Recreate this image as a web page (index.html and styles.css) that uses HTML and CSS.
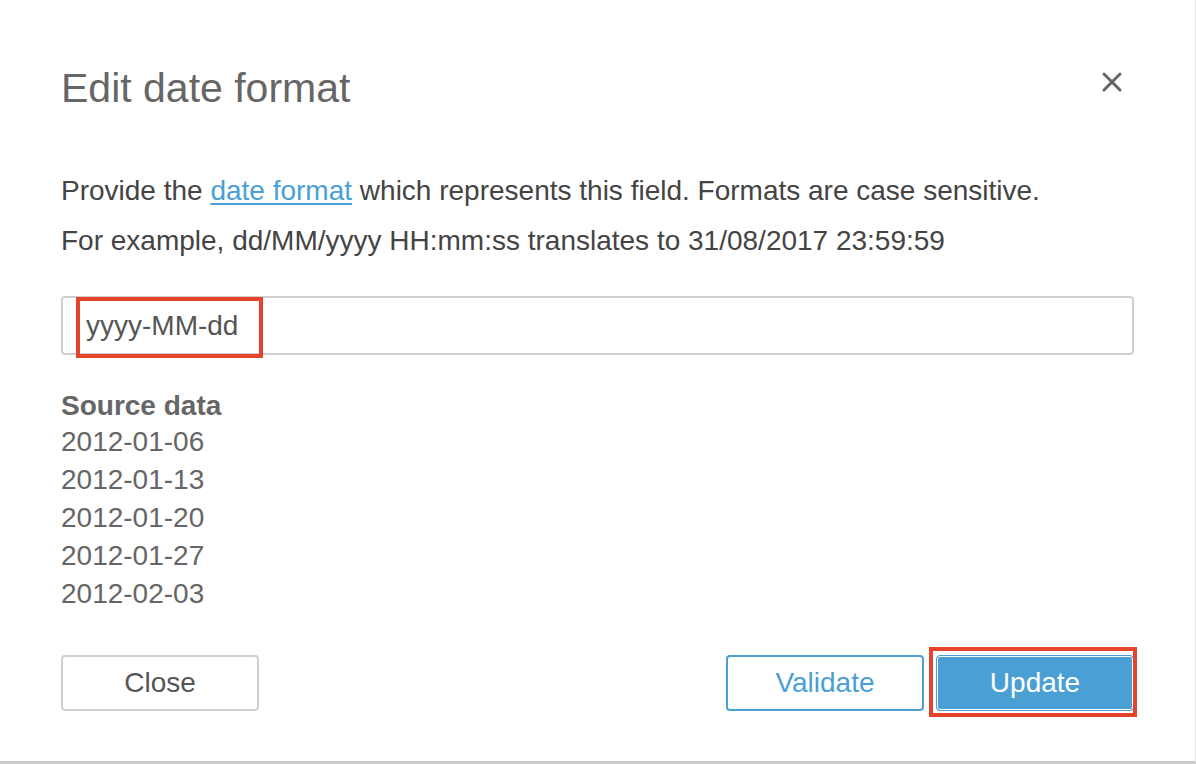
FILE: index.html
```html
<!DOCTYPE html>
<html lang="en">
<head>
<meta charset="utf-8">
<title>Edit date format</title>
<link rel="stylesheet" href="styles.css">
</head>
<body>
<div class="modal">
  <header class="modal-header">
    <h1 class="modal-title">Edit date format</h1>
    <button class="modal-close" aria-label="Close">
      <svg width="20" height="20" viewBox="0 0 20 20"><path d="M2 2 L18 18 M18 2 L2 18" stroke="#666" stroke-width="3" stroke-linecap="round" fill="none"/></svg>
    </button>
  </header>
  <div class="modal-body">
    <p class="help">Provide the <a href="#" class="link">date format</a> which represents this field. Formats are case sensitive.</p>
    <p class="help">For example, dd/MM/yyyy HH:mm:ss translates to 31/08/2017 23:59:59</p>
    <div class="field">
      <input class="text-input" type="text" value="yyyy-MM-dd">
      <span class="highlight highlight-input"></span>
    </div>
    <div class="source">
      <div class="source-title">Source data</div>
      <div class="source-row">2012-01-06</div>
      <div class="source-row">2012-01-13</div>
      <div class="source-row">2012-01-20</div>
      <div class="source-row">2012-01-27</div>
      <div class="source-row">2012-02-03</div>
    </div>
  </div>
  <footer class="modal-footer">
    <button class="btn btn-default">Close</button>
    <div class="btn-group">
      <button class="btn btn-outline">Validate</button>
      <div class="btn-wrap">
        <button class="btn btn-primary">Update</button>
        <span class="highlight highlight-btn"></span>
      </div>
    </div>
  </footer>
</div>
</body>
</html>
```

FILE: styles.css
```css
* { box-sizing: border-box; }
html, body { margin: 0; padding: 0; background: #fff; }
body { font-family: "Liberation Sans", Arial, Helvetica, sans-serif; }

.modal {
  width: 1196px;
  height: 764px;
  border-bottom: 3px solid #c9c9c9;
  border-right: 1px solid #e6e6e6;
  padding: 64px 61px 0 61px;
  display: flex;
  flex-direction: column;
}

.modal-header {
  display: flex;
  justify-content: space-between;
  align-items: flex-start;
  height: 48px;
}
.modal-title {
  margin: 0;
  font-size: 41px;
  line-height: 48px;
  font-weight: normal;
  color: #666;
}
.modal-close {
  border: none;
  background: none;
  padding: 0;
  margin: 8px 12px 0 0;
  width: 20px;
  height: 20px;
  cursor: pointer;
}
.modal-close svg { display: block; }

.modal-body { padding-top: 54px; }
.help {
  margin: 0;
  font-size: 28px;
  line-height: 50px;
  color: #444;
}
.link { color: #4a9fd5; text-decoration: underline; text-underline-offset: 3px; }

.field {
  position: relative;
  margin-top: 30px;
}
.text-input {
  display: block;
  width: 100%;
  height: 59px;
  border: 2px solid #cfcfcf;
  border-radius: 4px;
  padding: 0 0 0 23px;
  font-family: inherit;
  font-size: 28px;
  color: #555;
  outline: none;
}
.highlight {
  position: absolute;
  border: 4px solid #e5432b;
  pointer-events: none;
}
.highlight-input {
  left: 15px;
  top: 1px;
  width: 187px;
  height: 61px;
}

.source {
  margin-top: 33px;
  color: #666;
  font-size: 28px;
}
.source-title {
  font-weight: bold;
  line-height: 35px;
}
.source-row { line-height: 38px; }

.modal-footer {
  margin-top: 42px;
  display: flex;
  justify-content: space-between;
  align-items: flex-start;
}
.btn-group { display: flex; gap: 12px; }
.btn-wrap { position: relative; }
.btn {
  width: 198px;
  height: 56px;
  border-radius: 4px;
  font-family: inherit;
  font-size: 28px;
  cursor: pointer;
  padding: 0;
}
.btn-default {
  background: #fff;
  border: 2px solid #cfcfcf;
  color: #555;
}
.btn-outline {
  background: #fff;
  border: 2px solid #4a9fd5;
  color: #4a9fd5;
}
.btn-primary {
  display: block;
  background: #4a9fd5;
  border: 1px solid #4a9fd5;
  box-shadow: inset 0 0 0 1px #fff;
  color: #fff;
}
.highlight-btn {
  left: -7px;
  top: -8px;
  right: -3px;
  bottom: -6px;
}
```
